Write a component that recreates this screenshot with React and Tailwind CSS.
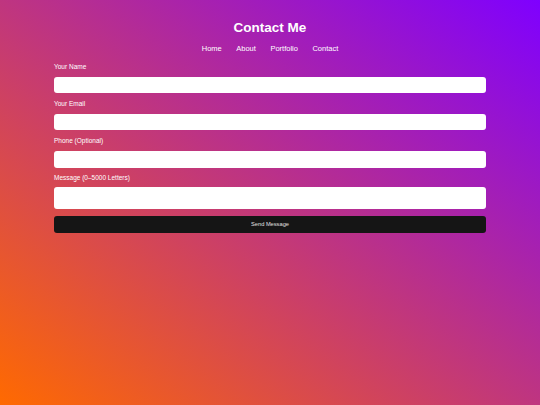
export default function App() {
  const fields = [
    { label: "Your Name", h: "h-[16.5px]" },
    { label: "Your Email", h: "h-[16.5px]" },
    { label: "Phone (Optional)", h: "h-[16.5px]" },
  ];
  return (
    <div
      className="w-full h-[405px] bg-[linear-gradient(to_top_right,#ff6a00,#7f00ff)] text-white overflow-hidden"
      style={{ fontFamily: '"Liberation Sans", Arial, sans-serif' }}
    >
      <div className="pt-[19.5px] flex flex-col items-center">
        <h1 className="text-[13.5px] leading-[16px] font-bold">Contact Me</h1>
        <nav className="mt-[8.5px] flex gap-[14.5px] text-[7.5px] leading-[9px]">
          <span>Home</span>
          <span>About</span>
          <span>Portfolio</span>
          <span>Contact</span>
        </nav>
      </div>
      <form className="w-[432px] mx-auto mt-[9.8px] flex flex-col">
        {fields.map((f) => (
          <div key={f.label} className="flex flex-col">
            <label className="text-[6.5px] leading-[8px] mb-[5.8px]">{f.label}</label>
            <div className={`${f.h} bg-white rounded-[3px] mb-[7px]`} />
          </div>
        ))}
        <label className="text-[6.5px] leading-[8px] mb-[4.8px] -mt-[0.5px]">Message (0–5000 Letters)</label>
        <div className="h-[22.5px] bg-white rounded-[3px] mb-[6.5px]" />
        <button
          type="button"
          className="h-[16.6px] bg-[#151515] rounded-[3px] text-[5.7px] leading-[8px] text-[#e0e0e0] flex items-center justify-center"
        >
          Send Message
        </button>
      </form>
    </div>
  );
}
